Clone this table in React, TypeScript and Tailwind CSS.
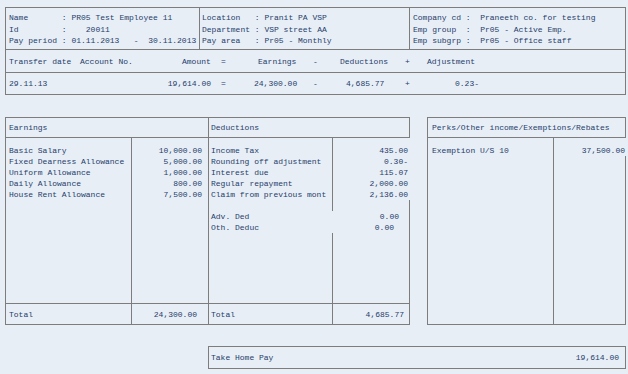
const line = "border-[#7d7d7d]";

const earnings = [
  ["Basic Salary", "10,000.00"],
  ["Fixed Dearness Allowance", "5,000.00"],
  ["Uniform Allowance", "1,000.00"],
  ["Daily Allowance", "800.00"],
  ["House Rent Allowance", "7,500.00"],
];

const deductions = [
  ["Income Tax", "435.00"],
  ["Rounding off adjustment", "0.30-"],
  ["Interest due", "115.07"],
  ["Regular repayment", "2,000.00"],
  ["Claim from previous mont", "2,136.00"],
];

const App = () => {
  return (
    <div className="w-[628px] h-[374px] bg-[#e8eef5] pl-[5px] pt-[7px] text-[8px] leading-[11px] text-[#1f3d6c] font-['Liberation_Mono',monospace] whitespace-pre overflow-hidden">
      {/* employee header */}
      <div className={`flex w-[621px] h-[43px] border ${line} leading-[11.5px]`}>
        <div className={`w-[194px] border-r ${line} pl-[3px] pt-[4px]`}>
          <div>Name       : PR05 Test Employee 11</div>
          <div>Id         :    20011</div>
          <div>Pay period : 01.11.2013   -  30.11.2013</div>
        </div>
        <div className={`w-[210px] border-r ${line} pl-[2px] pt-[4px]`}>
          <div>Location   : Pranit PA VSP</div>
          <div>Department : VSP street AA</div>
          <div>Pay area   : Pr05 - Monthly</div>
        </div>
        <div className="flex-1 pl-[3px] pt-[4px]">
          <div>Company cd :  Praneeth co. for testing</div>
          <div>Emp group  :  Pr05 - Active Emp.</div>
          <div>Emp subgrp :  Pr05 - Office staff</div>
        </div>
      </div>

      {/* transfer */}
      <div className={`flex items-center w-[621px] h-[23px] border-x border-b ${line} pl-[3px]`}>
        <span className="w-[71px]">Transfer date</span>
        <span className="w-[102px]">Account No.</span>
        <span className="w-[39px]">Amount</span>
        <span className="w-[37px]">=</span>
        <span className="w-[55px]">Earnings</span>
        <span className="w-[27px]">-</span>
        <span className="w-[65px]">Deductions</span>
        <span className="w-[22px]">+</span>
        <span>Adjustment</span>
      </div>
      <div className={`flex items-center w-[621px] h-[22px] border-x border-b ${line} pl-[3px]`}>
        <span className="w-[71px]">29.11.13</span>
        <span className="w-[131px] text-right">19,614.00</span>
        <span className="w-[43px] pl-[10px]">=</span>
        <span className="w-[59px]">24,300.00</span>
        <span className="w-[33px]">-</span>
        <span className="w-[59px]">4,685.77</span>
        <span className="w-[50px]">+</span>
        <span>0.23-</span>
      </div>

      {/* earnings / deductions / perks */}
      <div className="flex h-[208px] mt-[22px]">
        <div className={`flex flex-col w-[204px] border ${line}`}>
          <div className={`h-[20px] flex items-center border-b ${line} pl-[3px]`}>Earnings</div>
          <div className="flex flex-1">
            <div className={`w-[126px] border-r ${line} pl-[3px] pt-[7px]`}>
              {earnings.map(([k]) => (
                <div key={k}>{k}</div>
              ))}
            </div>
            <div className="flex-1 text-right pr-[6px] pt-[7px]">
              {earnings.map(([k, v]) => (
                <div key={k}>{v}</div>
              ))}
            </div>
          </div>
          <div className={`flex h-[21px] border-t ${line}`}>
            <div className={`w-[126px] border-r ${line} pl-[3px] flex items-center`}>Total</div>
            <div className="flex-1 flex items-center justify-end pr-[11px]">24,300.00</div>
          </div>
        </div>

        <div className={`flex flex-col w-[201px] border-y ${line}`}>
          <div className={`h-[20px] flex items-center border-b border-r ${line} pl-[2px]`}>Deductions</div>
          <div className="flex h-[62px]">
            <div className={`w-[124px] border-r ${line} pl-[2px] pt-[7px]`}>
              {deductions.map(([k]) => (
                <div key={k}>{k}</div>
              ))}
            </div>
            <div className="flex-1 text-right pr-[2px] pt-[7px]">
              {deductions.map(([k, v]) => (
                <div key={k}>{v}</div>
              ))}
            </div>
          </div>
          <div className="flex h-[11px]">
            <div className={`w-[124px] border-r ${line}`} />
            <div className={`flex-1 border-r ${line}`} />
          </div>
          <div className={`border-r ${line} pl-[2px]`}>
            <div className="flex justify-between pr-[10px]">
              <span>Adv. Ded</span>
              <span>0.00</span>
            </div>
            <div className="flex justify-between pr-[15px]">
              <span>Oth. Deduc</span>
              <span>0.00</span>
            </div>
          </div>
          <div className="flex flex-1">
            <div className={`w-[124px] border-r ${line}`} />
            <div className={`flex-1 border-r ${line}`} />
          </div>
          <div className={`flex h-[21px] border-t border-r ${line}`}>
            <div className={`w-[124px] border-r ${line} pl-[2px] flex items-center`}>Total</div>
            <div className="flex-1 flex items-center justify-end pr-[5px]">4,685.77</div>
          </div>
        </div>

        <div className={`flex flex-col w-[199px] ml-[17px] border-l border-y ${line}`}>
          <div className={`h-[20px] flex items-center border-b border-r ${line} pl-[4px]`}>
            Perks/Other income/Exemptions/Rebates
          </div>
          <div className="flex flex-1">
            <div className={`w-[126px] border-r ${line} pl-[4px] pt-[7px]`}>Exemption U/S 10</div>
            <div className="flex-1 flex flex-col">
              <div className="pt-[7px] text-right pr-[1px]">37,500.00</div>
              <div className={`flex-1 border-r ${line}`} />
            </div>
          </div>
        </div>
      </div>

      {/* take home */}
      <div className={`flex items-center justify-between w-[418px] h-[23px] ml-[203px] mt-[21px] border ${line} pl-[2px] pr-[6px]`}>
        <span>Take Home Pay</span>
        <span>19,614.00</span>
      </div>
    </div>
  );
};

export default App;
